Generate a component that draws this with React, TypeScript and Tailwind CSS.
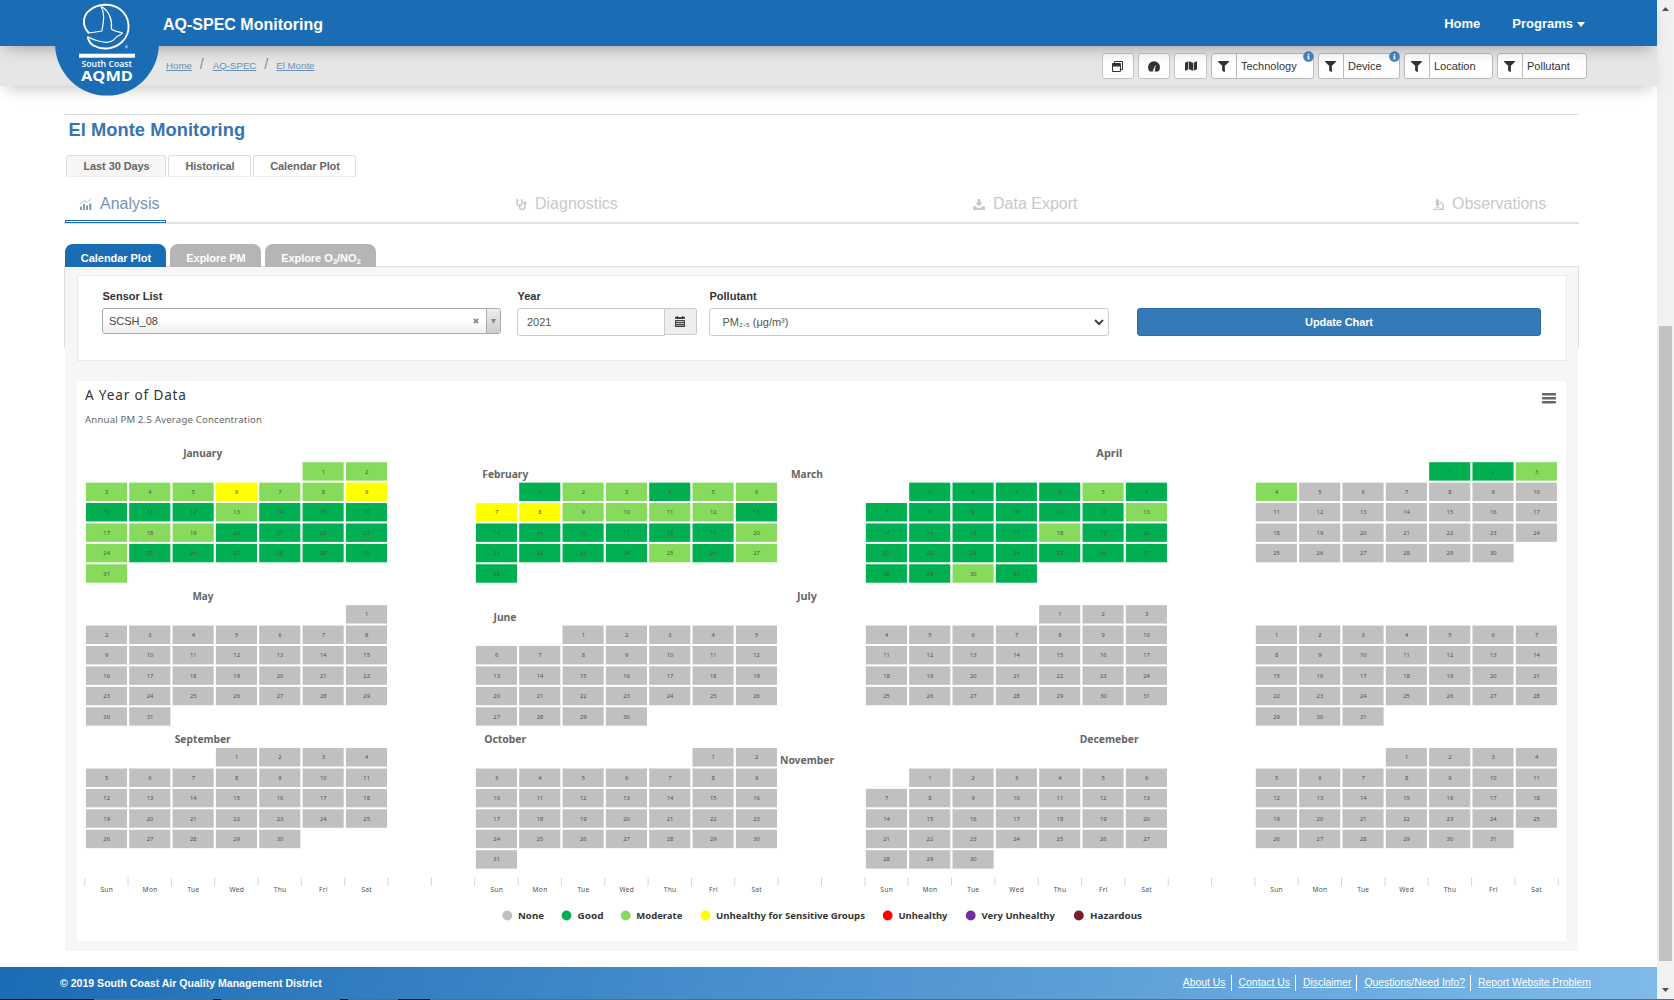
import React from 'react';
import { FaFilter, FaMap, FaRegWindowRestore, FaMicroscope, FaInfoCircle } from 'react-icons/fa';

const FILLS: Record<string, string> = {
  n: '#c0c0c0',
  g: '#00b050',
  m: '#86da5c',
  y: '#ffff00',
};

type Month = { col: number; row: number; start: number; days: number; levels?: string };

const MONTHS: Month[] = [
  { col: 0, row: 0, start: 5, days: 31, levels: 'mmmmmymmygggmgggmmmggggmggggggm' },
  { col: 9, row: 0, start: 1, days: 28, levels: 'gmmgmmyymmmmgggggggmggggmgmg' },
  { col: 18, row: 0, start: 1, days: 31, levels: 'ggggmgggggggmggggmgggggggggggmg' },
  { col: 27, row: 0, start: 4, days: 30, levels: 'ggmm' },
  { col: 0, row: 7, start: 6, days: 31 },
  { col: 9, row: 7, start: 2, days: 30 },
  { col: 18, row: 7, start: 4, days: 31 },
  { col: 27, row: 7, start: 0, days: 31 },
  { col: 0, row: 14, start: 3, days: 30 },
  { col: 9, row: 14, start: 5, days: 31 },
  { col: 18, row: 14, start: 1, days: 30 },
  { col: 27, row: 14, start: 3, days: 31 },
];

/* Rows of the calendar that leave their first line empty. */
const LEADING_GAP = new Set(['9-0', '18-0', '9-7', '27-7', '18-14']);

const TITLES: [string, number, number, number][] = [
  ['January', 202.7, 457.3, 39],
  ['February', 505.3, 478.3, 46],
  ['March', 807, 478.3, 32],
  ['April', 1109.3, 457.3, 26],
  ['May', 203, 600.3, 21],
  ['June', 505, 621.3, 23],
  ['July', 807, 600.3, 20],
  ['September', 202.7, 743.3, 56],
  ['October', 505.2, 743.3, 42],
  ['November', 807, 764.3, 54],
  ['Decemeber', 1109.2, 743.3, 59],
];

const LEGEND: [string, string, number, number, number][] = [
  ['None', '#c0c0c0', 507.3, 518, 26],
  ['Good', '#00b050', 566.5, 577.5, 26],
  ['Moderate', '#86da5c', 625.7, 636.3, 46],
  ['Unhealthy for Sensitive Groups', '#ffff00', 705.5, 716, 149],
  ['Unhealthy', '#ff0000', 887.7, 898.5, 49],
  ['Very Unhealthy', '#7030a0', 970.7, 981.5, 73.5],
  ['Hazardous', '#7b1c2c', 1078.8, 1090, 52],
];

const DAYS = ['Sun', 'Mon', 'Tue', 'Wed', 'Thu', 'Fri', 'Sat'];
const PW = 43.33;
const PH = 20.42;
const X0 = 84.8;
const Y0 = 461.2;

function YearChart() {
  const cells: React.ReactNode[] = [];
  MONTHS.forEach((m) => {
    const gap = LEADING_GAP.has(`${m.col}-${m.row}`) ? 1 : 0;
    for (let d = 1; d <= m.days; d++) {
      const i = m.start + d - 1;
      const x = X0 + PW * (m.col + (i % 7));
      const y = Y0 + PH * (m.row + gap + Math.floor(i / 7));
      cells.push(
        <g key={`${m.col}-${m.row}-${d}`}>
          <rect x={x + 1.1} y={y + 1} width={PW - 2.2} height={PH - 2} fill={FILLS[m.levels?.[d - 1] ?? 'n']} />
          <text x={x + PW / 2 + 0.2} y={y + 12.3} textAnchor="middle" fontSize="5.8" fill="#505050">
            {d}
          </text>
        </g>,
      );
    }
  });
  return (
    <svg viewBox="77 381 1489 560" className="block h-[560px] w-[1489px] bg-white" fontFamily='"Noto Sans", "Open Sans", sans-serif'>
      <text x="85" y="400" fontSize="13.600" fill="#333" textLength="101">A Year of Data</text>
      <text x="85" y="423" fontSize="9.6" fill="#666" textLength="177">Annual PM 2.5 Average Concentration</text>
      <g stroke="#666" strokeWidth="2.4" strokeLinecap="round">
        <path d="M1543 394.2h12M1543 398.2h12M1543 402.2h12" />
      </g>
      {cells}
      <g fontWeight="700" fontSize="10.500" fill="#666">
        {TITLES.map(([t, x, y, w]) => (
          <text key={t} x={x - w / 2} y={y} textLength={w} lengthAdjust="spacingAndGlyphs">{t}</text>
        ))}
      </g>
      {Array.from({ length: 35 }, (_, i) => (
        <rect key={i} x={84.2 + 43.34 * i} y="877.5" width="1" height="8.5" fill="#ccd6eb" />
      ))}
      <g fontSize="6.6" fill="#505050">
        {[0, 9, 18, 27].flatMap((c) =>
          DAYS.map((d, i) => (
            <text key={`${c}${d}`} x={X0 + PW * (c + i + 0.5) + 0.3} y="892.2" textAnchor="middle" letterSpacing="0.3">{d}</text>
          )),
        )}
      </g>
      {LEGEND.map(([t, c, cx, x, w]) => (
        <g key={t}>
          <circle cx={cx} cy="915.5" r="4.9" fill={c} />
          <text x={x} y="919.3" fontSize="9.6" fontWeight="700" fill="#333" textLength={w} lengthAdjust="spacingAndGlyphs">{t}</text>
        </g>
      ))}
    </svg>
  );
}

function Logo() {
  return (
    <svg viewBox="0 0 104 104" className="absolute left-[55px] top-[-8px] z-20 h-[104px] w-[104px]">
      <circle cx="52" cy="51.700" r="51.900" fill="#1a6cb5" />
      <g fill="none" stroke="#fff" strokeLinecap="round" strokeLinejoin="round" transform="translate(.4 1)">
        <path d="M33 39.500C26 32 28 22 34 17.500c8-7 22-8 31-1 10 8 11 23 2 32-8 8-20 9-29 4-3-2-5-5-5.500-8" strokeWidth="1.900" />
        <path d="M45.500 13c4 7 3 14 1 25-5 1-9 1.500-13.500 2" strokeWidth="1.200" />
        <path d="M47 14c7 5 10 12 9 22 3 3 7 2 11 4-2 3-5 2-7 5-3 4-9 5-15 3.500-4-1-8-2-12-4.500" strokeWidth="1.200" />
      </g>
      <circle cx="71.500" cy="54.800" r="1.700" fill="#7aa9d4" />
      <rect x="24" y="61.700" width="56" height="4" fill="#fff" />
      <text x="26.500" y="74.600" textLength="50.500" lengthAdjust="spacingAndGlyphs" fontFamily='"Open Sans", sans-serif' fontWeight="600" fontSize="8.500" fill="#fff">South Coast</text>
      <text x="26" y="89.400" textLength="52" lengthAdjust="spacingAndGlyphs" fontFamily='"Open Sans", sans-serif' fontWeight="700" fontSize="15" fill="#fff">AQMD</text>
    </svg>
  );
}

function IconButton({ children, cls }: { children: React.ReactNode; cls: string }) {
  return (
    <div className={`flex h-[26px] items-center justify-center rounded-[3px] border border-[#c4c4c4] bg-white text-[#333] ${cls}`}>
      {children}
    </div>
  );
}

function FilterButton({ label, cls, info }: { label: string; cls: string; info?: boolean }) {
  return (
    <div className={`relative flex h-[26px] items-center rounded-[3px] border border-[#bbb] bg-white text-[#333] ${cls}`}>
      <span className="flex h-full w-[25px] shrink-0 items-center justify-center border-r border-[#bbb] pr-px">
        <FaFilter size={11} />
      </span>
      <span className="pl-[4px] text-[11px] leading-none">{label}</span>
      {info && (
        <span className="absolute -right-[1px] -top-[3px] rounded-full bg-white">
          <FaInfoCircle size={11} color="#3f87c9" />
        </span>
      )}
    </div>
  );
}

function SubNav() {
  const rest = 'flex h-[29px] items-center text-[16px] leading-none text-[#c9c9c9]';
  return (
    <div className="mt-[12px] flex h-[35px] w-[1515px] border-b-2 border-[#e0e0e0]">
      <div className="ml-px flex h-[34px] w-[101px] shrink-0 flex-col">
        <div className="mb-[2px] flex h-[29px] items-center pl-[14px] text-[16px] leading-none text-[#7595b9]">
          <svg viewBox="0 0 15 13" className="mr-[7px] mt-px h-[12px] w-[14px] shrink-0">
            <path d="M1 9.500h2V13H1zM4.300 6.500h2V13h-2zM7.600 8h2v5h-2zM11 6h2.200v7H11z" fill="currentColor" />
            <path d="M.8 6.800 5.300 2.500 8.500 5 13 1.200" fill="none" stroke="currentColor" strokeWidth=".9" opacity=".7" />
          </svg>
          Analysis
        </div>
        <div className="z-10 h-[3px] shrink-0 border border-[#1a6cb5] bg-white" />
      </div>
      <div className={`${rest} w-[457px] shrink-0 pl-[350px]`}>
        <svg viewBox="0 0 12 13" className="mr-[8px] mt-[2px] h-[12px] w-[11px] shrink-0" fill="none" stroke="currentColor" strokeWidth="1.700">
          <path d="M2.500 1.200H1.200v3.300a2.600 2.600 0 0 0 5.200 0V1.200H5.200M3.800 7v1.800c0 3.600 6 3.600 6 0V6" />
          <circle cx="9.800" cy="4.300" r="1.100" />
        </svg>
        Diagnostics
      </div>
      <div className={`${rest} w-[460px] shrink-0 pl-[350px]`}>
        <svg viewBox="0 0 13 12" className="mr-[8px] mt-[2px] h-[11px] w-[12px] shrink-0" fill="currentColor">
          <path d="M5 0h3v4h2.500L6.500 8 2.500 4H5zM0 8h3l2 1.800h3L10 8h3v4H0z" />
        </svg>
        <span className="whitespace-nowrap">Data Export</span>
      </div>
      <div className={`${rest} pl-[350px]`}>
        <FaMicroscope size={11} className="mr-[8px] mt-[2px] shrink-0" />
        Observations
      </div>
    </div>
  );
}

function Controls() {
  const label = 'pl-[0.500px] text-[11px] font-bold leading-[12px] text-[#333]';
  return (
    <div className="ml-[12px] flex h-[86px] w-[1490px] border border-[#eaeaea] bg-white pl-[24px] pt-[14px]">
      <div className="w-[415px] shrink-0">
        <div className={label}>Sensor List</div>
        <div className="mt-[6px] flex h-[26px] w-[399px] items-stretch rounded-[3px] border border-[#aaa] bg-linear-to-b from-white from-50% to-[#eee] text-[11px] text-[#444]">
          <span className="flex flex-1 items-center pl-[6px]">SCSH_08</span>
          <span className="flex w-[20px] items-center justify-center">
            <svg viewBox="0 0 6 6" className="h-[6px] w-[6px]"><path d="M.8.8l4.400 4.400M5.200.8.8 5.200" stroke="#888" strokeWidth="1.700" /></svg>
          </span>
          <span className="flex w-[14px] items-center justify-center rounded-r-[2px] border-l border-[#aaa] bg-linear-to-b from-[#eee] to-[#ccc]">
            <svg viewBox="0 0 5 5" className="h-[5px] w-[5px]"><path d="M0 0h5L2.500 5z" fill="#888" /></svg>
          </span>
        </div>
      </div>
      <div className="w-[192px] shrink-0">
        <div className={label}>Year</div>
        <div className="mt-[6px] flex text-[11px] text-[#555]">
          <div className="flex h-[28px] w-[148px] items-center rounded-l-[3px] border border-[#ccc] pl-[9px]">2021</div>
          <div className="flex h-[27px] w-[32px] items-center justify-center rounded-r-[3px] border border-l-0 border-[#ccc] bg-[#eee] pr-px">
            <svg viewBox="0 0 10 11" className="h-[11px] w-[10px]" fill="#444">
              <path d="M0 1h1.500V0H3v1h4V0h1.500v1H10v2H0zM0 4h10v1.300H0zM0 6h10v1.300H0zM0 8h10v1.300H0zM0 9.800h10V11H0z" />
              <path d="M0 4h1v7H0zM9 4h1v7H9z" />
            </svg>
          </div>
        </div>
      </div>
      <div className="w-[428px] shrink-0">
        <div className={label}>Pollutant</div>
        <div className="mt-[6px] flex h-[28px] w-[400px] items-center justify-between rounded-[3px] border border-[#ccc] pl-[12.500px] pr-[4px] text-[11px] text-[#555]">
          <span>PM<span className="text-[10px]">₂.₅</span> (μg/m³)</span>
          <svg viewBox="0 0 10 7" className="h-[7px] w-[10px]"><path d="M1 1l4 4 4-4" fill="none" stroke="#444" strokeWidth="2" /></svg>
        </div>
      </div>
      <div className="pt-[18px]">
        <div className="flex h-[28px] w-[404px] items-center justify-center rounded-[3px] border border-[#2e6da4] bg-[#337ab7] text-[11px] font-bold text-white">
          <span className="tracking-[-0.1px]">Update Chart</span>
        </div>
      </div>
    </div>
  );
}

export default function App() {
  const pageTab = 'flex h-[22px] items-center justify-center rounded-t-[3px] border border-b-[#eee] border-[#ddd] pl-px text-[11px] font-bold tracking-[-0.1px] text-[#666]';
  const plotTab = 'flex h-[23px] items-center justify-center rounded-t-[8px] pl-px pt-[6px] text-[11px] font-bold leading-none tracking-[-0.050px] text-white';
  const link = 'flex h-[16px] items-center pt-px text-[10.400px] leading-none underline';
  const sep = 'ml-[5px] mr-[7px] h-[16px] w-px bg-white';
  return (
    <div className="relative flex h-[1000px] w-[1674px] flex-col overflow-hidden bg-white font-['Liberation_Sans',Arial,sans-serif]">
      <div className="flex h-[999px]">
        <div className="relative flex w-[1657px] flex-col">
          <Logo />
          <header className="z-10 flex h-[46px] shrink-0 items-center justify-between bg-[#1a6cb5] pl-[163px] pr-[72px] text-white shadow-[0_8px_16px_-6px_rgba(0,0,0,0.3)]">
            <div className="pt-[4px] text-[16px] font-bold">AQ-SPEC Monitoring</div>
            <nav className="flex items-center pt-[2px] text-[13px] font-bold">
              <span className="mr-[32px]">Home</span>
              <span>Programs</span>
              <svg viewBox="0 0 8 5" className="ml-[4px] h-[5px] w-[8px]"><path d="M0 0h8L4 5z" fill="#fff" /></svg>
            </nav>
          </header>
          <div className="flex h-[40px] shrink-0 items-start justify-between bg-[#e6e6e6] pl-[166px] pr-[70px] shadow-[0_8px_16px_-6px_rgba(0,0,0,0.25)]">
            <div className="flex h-[40px] items-center text-[9.700px] text-[#6a90b5]">
              <span className="underline">Home</span>
              <span className="mx-[8px] mb-[4px] text-[14px]">/</span>
              <span className="ml-px underline">AQ-SPEC</span>
              <span className="mx-[8px] mb-[4px] text-[14px]">/</span>
              <span className="underline">El Monte</span>
            </div>
            <div className="flex gap-[4px] pt-[7px]">
              <IconButton cls="w-[32px] pr-px"><FaRegWindowRestore size={11} /></IconButton>
              <IconButton cls="w-[32px]">
                <svg viewBox="0 0 12 11" className="h-[11px] w-[12px]">
                  <path d="M1.800 10.500A6 6 0 1 1 10.200 10.500z" fill="#333" />
                  <path d="M5 9.300a1.100 1.100 0 1 0 2 0L7.700 3.500z" fill="#fff" />
                </svg>
              </IconButton>
              <IconButton cls="w-[33px]"><FaMap size={12} /></IconButton>
              <div className="flex">
                <FilterButton label="Technology" cls="mr-[4px] w-[103px]" info />
                <FilterButton label="Device" cls="mr-[4px] w-[82px]" info />
                <FilterButton label="Location" cls="mr-[4px] w-[89px]" />
                <FilterButton label="Pollutant" cls="w-[90px]" />
              </div>
            </div>
          </div>

          <main className="ml-[64px] mt-[28px] h-[853px] w-[1515px] shrink-0 border-t border-[#ddd]">
            <h1 className="ml-[4.500px] mt-[4px] text-[18.300px] font-bold leading-[22px] tracking-[0.050px] text-[#3673b3]">El Monte Monitoring</h1>
            <div className="ml-[2px] mt-[14px] flex gap-[2px]">
              <div className={`${pageTab} w-[100px] bg-[#f6f6f6]`}>Last 30 Days</div>
              <div className={`${pageTab} w-[83px]`}>Historical</div>
              <div className={`${pageTab} w-[103px]`}>Calendar Plot</div>
            </div>
            <SubNav />
            <div className="relative z-10 ml-px mt-[20px] flex h-[23px] gap-[4px]">
              <div className={`${plotTab} w-[101px] bg-[#1a6cb5]`}>Calendar Plot</div>
              <div className={`${plotTab} w-[91px] bg-[#b5b5b5]`}>Explore PM</div>
              <div className={`${plotTab} w-[111px] bg-[#b5b5b5]`}>
                <span>Explore O<sub className="text-[8px]">3</sub>/NO<sub className="text-[8px]">2</sub></span>
              </div>
            </div>
            <div className="relative -mt-px h-[82px] border border-b-0 border-[#ddd]">
              <div className="h-[684px] w-[1513px] bg-[#f6f6f6] pt-[8px]">
                <Controls />
                <div className="ml-[12px] mt-[20px]"><YearChart /></div>
              </div>
            </div>
          </main>

          <footer className="flex h-[32px] shrink-0 items-center justify-between bg-linear-[105deg] from-[#1b6cb5] to-[#7fbaea] pl-[60px] pr-[66px] text-white">
            <div className="pt-px text-[10.550px] font-bold">© 2019 South Coast Air Quality Management District</div>
            <div className="flex items-center">
              <span className={link}>About Us</span>
              <span className={sep} />
              <span className={link}>Contact Us</span>
              <span className={sep} />
              <span className={link}>Disclaimer</span>
              <span className={sep} />
              <span className={link}>Questions/Need Info?</span>
              <span className={sep} />
              <span className={link}>Report Website Problem</span>
            </div>
          </footer>
        </div>
        <div className="flex w-[17px] flex-col items-center bg-[#f1f1f1]">
          <svg viewBox="0 0 7 4" className="mt-[7px] h-[4px] w-[7px]"><path d="M0 4h7L3.500 0z" fill="#505050" /></svg>
          <div className="mt-[315px] h-[635px] w-[13px] bg-[#c1c1c1]" />
          <svg viewBox="0 0 7 4" className="mt-[27px] h-[4px] w-[7px]"><path d="M0 0h7L3.500 4z" fill="#505050" /></svg>
        </div>
      </div>
      <div className="flex h-px bg-[#5f6b78]">
        <div className="w-[94px] bg-[#0e1a2c]" />
        <div className="ml-[119px] w-[8px] bg-[#0e1a2c]" />
        <div className="ml-[119px] w-[8px] bg-[#0e1a2c]" />
        <div className="ml-[50px] w-[32px] bg-[#0e1a2c]" />
      </div>
    </div>
  );
}
